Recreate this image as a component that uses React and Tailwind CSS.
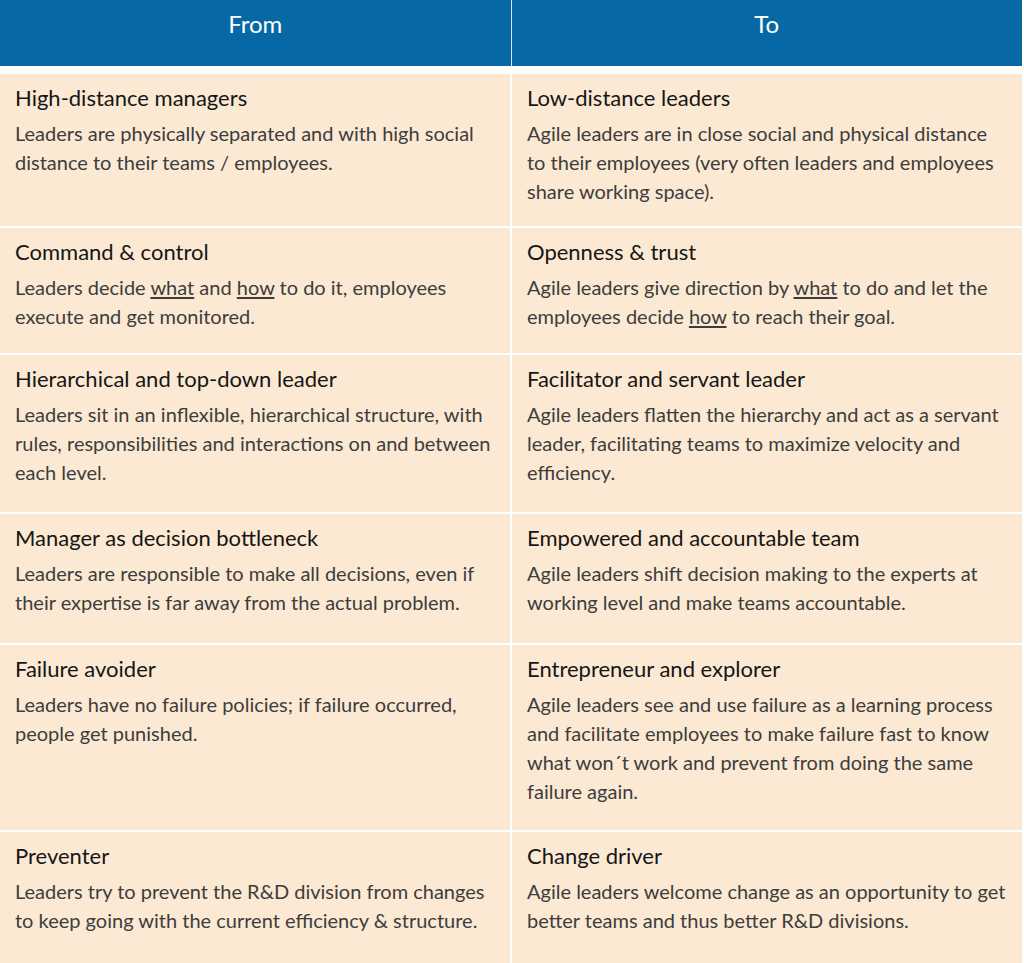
import React from "react";

const rows = [
  {
    pad: "pb-[20px]",
    from: {
      title: "High-distance managers",
      body: "Leaders are physically separated and with high social distance to their teams / employees.",
    },
    to: {
      title: "Low-distance leaders",
      body: "Agile leaders are in close social and physical distance to their employees (very often leaders and employees share working space).",
    },
  },
  {
    pad: "pb-[22px]",
    from: {
      title: "Command & control",
      body: (
        <>
          Leaders decide <span className="underline underline-offset-2">what</span> and{" "}
          <span className="underline underline-offset-2">how</span> to do it, employees execute and get monitored.
        </>
      ),
    },
    to: {
      title: "Openness & trust",
      body: (
        <>
          Agile leaders give direction by <span className="underline underline-offset-2">what</span> to do and let the
          employees decide <span className="underline underline-offset-2">how</span> to reach their goal.
        </>
      ),
    },
  },
  {
    pad: "pb-[25px]",
    from: {
      title: "Hierarchical and top-down leader",
      body: "Leaders sit in an inflexible, hierarchical structure, with rules, responsibilities and interactions on and between each level.",
    },
    to: {
      title: "Facilitator and servant leader",
      body: "Agile leaders flatten the hierarchy and act as a servant leader, facilitating teams to maximize velocity and efficiency.",
    },
  },
  {
    pad: "pb-[26px]",
    from: {
      title: "Manager as decision bottleneck",
      body: "Leaders are responsible to make all decisions, even if their expertise is far away from the actual problem.",
    },
    to: {
      title: "Empowered and accountable team",
      body: "Agile leaders shift decision making to the experts at working level and make teams accountable.",
    },
  },
  {
    pad: "pb-[24px]",
    from: {
      title: "Failure avoider",
      body: "Leaders have no failure policies; if failure occurred, people get punished.",
    },
    to: {
      title: "Entrepreneur and explorer",
      body: "Agile leaders see and use failure as a learning process and facilitate employees to make failure fast to know what won´t work and prevent from doing the same failure again.",
    },
  },
  {
    pad: "pb-[30px]",
    from: {
      title: "Preventer",
      body: "Leaders try to prevent the R&D division from changes to keep going with the current efficiency & structure.",
    },
    to: {
      title: "Change driver",
      body: "Agile leaders welcome change as an opportunity to get better teams and thus better R&D divisions.",
    },
  },
];

const Cell = ({ title, body, pad }) => (
  <div className={`bg-[#fbe9d3] pl-[15px] pr-[13px] pt-[10px] ${pad}`}>
    <div className="text-[22px] leading-[28px] text-[#161616]">{title}</div>
    <p className="mt-[7px] text-[20px] leading-[29px] text-[#3d3d3d]">{body}</p>
  </div>
);

const App = () => {
  return (
    <div
      className="w-[1024px] h-[963px] overflow-hidden bg-white pr-[2px]"
      style={{ fontFamily: "Lato, 'Open Sans', sans-serif" }}
    >
      <div className="grid grid-cols-2 gap-x-[1px] bg-[#d8e8f2] h-[66px]">
        <div className="bg-[#0669a6] text-white text-[24px] text-center pt-[6px]">From</div>
        <div className="bg-[#0669a6] text-white text-[24px] text-center pt-[6px]">To</div>
      </div>
      <div className="mt-[8px] grid grid-cols-2 gap-[2px]">
        {rows.map((row, i) => (
          <React.Fragment key={i}>
            <Cell {...row.from} pad={row.pad} />
            <Cell {...row.to} pad={row.pad} />
          </React.Fragment>
        ))}
      </div>
    </div>
  );
};

export default App;
